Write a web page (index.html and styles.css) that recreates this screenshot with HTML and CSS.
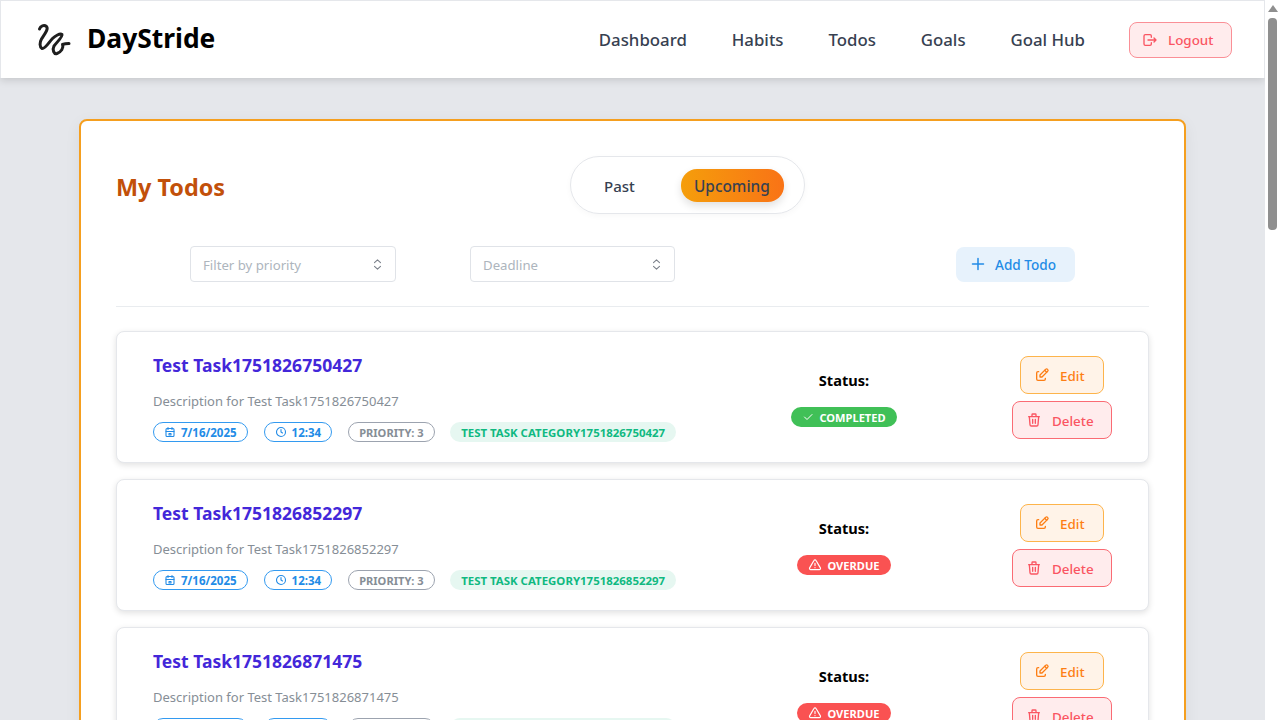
FILE: index.html
```html
<!DOCTYPE html>
<html lang="en">
<head>
  <meta charset="UTF-8">
  <title>DayStride - My Todos</title>
  <link rel="stylesheet" href="styles.css">
</head>
<body>
  <div class="viewport">
    <div class="page">
      <header class="topbar">
        <div class="brand">
          <svg class="brand-logo" width="34" height="34" viewBox="0 0 34 34" fill="none" stroke="#1f1f1f" stroke-width="3" stroke-linecap="round" stroke-linejoin="round"><path d="M2.500 6C3.500 3 7 1.500 9.500 3.500C12 6 7 12 4.500 16C2.500 19.500 2.500 24 5 25.500C8 26.500 12 19 15.500 15.500C18 13 23 10 25 11.500C26 13.500 20 19 17 23C15 27 17 31.500 20 30.500C24 29 27 25 25.500 21.500C28 20.500 30 20.500 32 20.500"/></svg>
          <span class="brand-name">DayStride</span>
        </div>
        <nav class="nav">
          <a>Dashboard</a>
          <a>Habits</a>
          <a>Todos</a>
          <a>Goals</a>
          <a>Goal Hub</a>
          <button class="logout">
            <svg width="16" height="16" viewBox="0 0 24 24" fill="none" stroke="currentColor" stroke-width="2" stroke-linecap="round" stroke-linejoin="round"><path d="M14 8V6a2 2 0 0 0-2-2H5a2 2 0 0 0-2 2v12a2 2 0 0 0 2 2h7a2 2 0 0 0 2-2v-2"/><path d="M9 12h12l-3-3m0 6l3-3"/></svg>
            Logout
          </button>
        </nav>
      </header>

      <main class="panel">
        <div class="panel-head">
          <h1 class="panel-title">My Todos</h1>
          <div class="toggle">
            <span class="toggle-item">Past</span>
            <span class="toggle-item active">Upcoming</span>
          </div>
        </div>

        <div class="filters">
          <div class="select select-first"><span class="select-text">Filter by priority</span>
            <svg width="15" height="15" viewBox="0 0 15 15" fill="none" stroke="#7b808a" stroke-width="1.100" stroke-linecap="round" stroke-linejoin="round"><path d="M4.500 5.700L7.500 2.800L10.500 5.700M4.500 9.300L7.500 12.200L10.500 9.300"/></svg>
          </div>
          <div class="select select-second"><span class="select-text">Deadline</span>
            <svg width="15" height="15" viewBox="0 0 15 15" fill="none" stroke="#7b808a" stroke-width="1.100" stroke-linecap="round" stroke-linejoin="round"><path d="M4.500 5.700L7.500 2.800L10.500 5.700M4.500 9.300L7.500 12.200L10.500 9.300"/></svg>
          </div>
          <button class="add-btn">
            <svg width="14" height="14" viewBox="0 0 14 14" fill="none" stroke="currentColor" stroke-width="1.500" stroke-linecap="round"><path d="M7 1.500v11M1.500 7h11"/></svg>
            Add Todo
          </button>
        </div>

        <div class="divider"></div>

        <div class="todo-list" id="todo-list"></div>
      </main>
    </div>
    <div class="scrollbar">
      <span class="scroll-arrow"></span>
      <span class="scroll-thumb"></span>
    </div>
  </div>

  <script>
    const todos = [
      { id: '1751826750427', status: 'completed' },
      { id: '1751826852297', status: 'overdue' },
      { id: '1751826871475', status: 'overdue' }
    ];

    const icons = {
      calendar: '<svg width="12" height="12" viewBox="0 0 24 24" fill="none" stroke="currentColor" stroke-width="2.200" stroke-linecap="round" stroke-linejoin="round"><rect x="4" y="5" width="16" height="16" rx="2"/><path d="M16 3v4M8 3v4M4 11h16M10 15h4v3h-4z"/></svg>',
      clock: '<svg width="12" height="12" viewBox="0 0 24 24" fill="none" stroke="currentColor" stroke-width="2.200" stroke-linecap="round" stroke-linejoin="round"><circle cx="12" cy="12" r="9"/><path d="M12 7v5l3 2"/></svg>',
      check: '<svg width="12" height="12" viewBox="0 0 24 24" fill="none" stroke="currentColor" stroke-width="2" stroke-linecap="round" stroke-linejoin="round"><path d="M5 12l5 5L20 7"/></svg>',
      alert: '<svg width="14" height="14" viewBox="0 0 24 24" fill="none" stroke="currentColor" stroke-width="2" stroke-linecap="round" stroke-linejoin="round"><path d="M12 9v4m0 3.500v.01"/><path d="M10.200 4.300L2.800 17a2 2 0 0 0 1.700 3h15a2 2 0 0 0 1.700-3L13.800 4.300a2 2 0 0 0-3.600 0z"/></svg>',
      edit: '<svg width="16" height="16" viewBox="0 0 24 24" fill="none" stroke="currentColor" stroke-width="2" stroke-linecap="round" stroke-linejoin="round"><path d="M7 7H6a2 2 0 0 0-2 2v9a2 2 0 0 0 2 2h9a2 2 0 0 0 2-2v-1"/><path d="M20.400 6.600a2.100 2.100 0 0 0-3-3L9 12v3h3z"/><path d="M16 5l3 3"/></svg>',
      trash: '<svg width="16" height="16" viewBox="0 0 24 24" fill="none" stroke="currentColor" stroke-width="2" stroke-linecap="round" stroke-linejoin="round"><path d="M4 7h16M10 11v6M14 11v6M5 7l1 12a2 2 0 0 0 2 2h8a2 2 0 0 0 2-2l1-12M9 7V4a1 1 0 0 1 1-1h4a1 1 0 0 1 1 1v3"/></svg>'
    };

    const list = document.getElementById('todo-list');

    // Generate todo cards
    todos.forEach((todo) => {
      const done = todo.status === 'completed';
      const card = document.createElement('article');
      card.className = 'todo';
      card.innerHTML = `
        <div class="todo-info">
          <h2 class="todo-title">Test Task${todo.id}</h2>
          <p class="todo-desc">Description for Test Task${todo.id}</p>
          <div class="tags">
            <span class="tag tag-blue">${icons.calendar}7/16/2025</span>
            <span class="tag tag-blue">${icons.clock}12:34</span>
            <span class="tag tag-gray">Priority: 3</span>
            <span class="tag tag-green">Test Task Category${todo.id}</span>
          </div>
        </div>
        <div class="todo-status">
          <span class="status-label">Status:</span>
          <span class="status-badge ${done ? 'done' : 'late'}">${done ? icons.check : icons.alert}${done ? 'Completed' : 'Overdue'}</span>
        </div>
        <div class="todo-actions">
          <button class="act act-edit">${icons.edit}<span class="act-text">Edit</span></button>
          <button class="act act-delete">${icons.trash}<span class="act-text">Delete</span></button>
        </div>
      `;
      list.appendChild(card);
    });
  </script>
</body>
</html>
```

FILE: styles.css
```css
* {
  box-sizing: border-box;
}
html, body {
  height: 100%;
  margin: 0;
}
body {
  font-family: "Noto Sans", sans-serif;
  color: #374151;
  overflow: hidden;
}
.viewport {
  display: flex;
  height: 720px;
}
.page {
  flex: 1;
  min-width: 0;
  height: 720px;
  overflow: hidden;
  background-color: #e5e7eb;
}
.scrollbar {
  width: 15px;
  background-color: #fff;
  display: flex;
  flex-direction: column;
  align-items: center;
}
.scroll-arrow {
  margin-top: 5px;
  border-left: 5px solid transparent;
  border-right: 5px solid transparent;
  border-bottom: 7px solid #8f8f8f;
}
.scroll-thumb {
  width: 9px;
  height: 212px;
  margin-top: 6px;
  border-radius: 4px;
  background-color: #8f8f8f;
}

/* top bar */
.topbar {
  height: 78px;
  display: flex;
  align-items: center;
  justify-content: space-between;
  padding: 0 32px 0 36px;
  background-color: #fff;
  border: 1px solid #e5e7eb;
  border-bottom: 0;
  box-shadow: 0 2px 8px rgba(0, 0, 0, 0.15);
  position: relative;
}
.brand {
  display: flex;
  align-items: center;
  gap: 16px;
}
.brand-name {
  padding-bottom: 3px;
  font-size: 26.400px;
  font-weight: 700;
  color: #000;
}
.nav {
  display: flex;
  align-items: center;
  gap: 45px;
  font-size: 16.800px;
  font-weight: 500;
  color: #374151;
}
.logout {
  display: flex;
  align-items: center;
  gap: 10px;
  height: 36px;
  width: 103px;
  margin-left: -1px;
  padding: 0 12px;
  border: 1px solid #fa8f96;
  border-radius: 8px;
  background-color: #ffeced;
  color: #fa5562;
  font: 500 13.400px "Noto Sans", sans-serif;
}

/* panel */
.panel {
  width: 1107px;
  margin: 41px 0 0 79px;
  padding: 35px 35px 0;
  background-color: #fff;
  border: 2px solid #f59f1f;
  border-radius: 8px;
  box-shadow: 0 4px 16px rgba(0, 0, 0, 0.06);
}
.panel-head {
  display: flex;
  align-items: center;
  height: 58px;
}
.panel-title {
  width: 454px;
  margin: 0;
  padding-top: 3px;
  font-size: 23.400px;
  font-weight: 700;
  color: #c2500a;
}
.toggle {
  width: 235px;
  height: 58px;
  display: flex;
  align-items: center;
  justify-content: space-between;
  padding: 0 20px 0 18px;
  border: 1px solid #e5e7eb;
  border-radius: 29px;
  box-shadow: 0 2px 6px rgba(0, 0, 0, 0.03);
  font-size: 15px;
  font-weight: 500;
}
.toggle-item {
  padding: 2px 15px 0;
}
.toggle-item.active {
  height: 33px;
  width: 103px;
  margin-top: 1px;
  line-height: 33px;
  padding: 1px 0 0 13px;
  font-size: 15.400px;
  border-radius: 16px;
  background: linear-gradient(90deg, #f59e0b, #f97316);
  box-shadow: 0 4px 8px rgba(0, 0, 0, 0.12);
}
.filters {
  display: flex;
  align-items: center;
  margin-top: 32px;
  padding-left: 74px;
}
.select {
  height: 36px;
  display: flex;
  align-items: center;
  justify-content: space-between;
  padding: 0 10px 0 12px;
  border: 1px solid #e0e3e8;
  border-radius: 4px;
  font-size: 13.200px;
  color: #adb5bd;
}
.select-text {
  padding-top: 2px;
}
.select-first {
  width: 206px;
}
.select-second {
  width: 205px;
  margin-left: 74px;
}
.add-btn {
  display: flex;
  align-items: center;
  gap: 10px;
  width: 119px;
  height: 35px;
  margin-left: 281px;
  padding: 0 15px;
  border: 0;
  border-radius: 8px;
  background-color: #e7f2fc;
  color: #228be6;
  font: 500 13.600px "Noto Sans", sans-serif;
}
.divider {
  height: 1px;
  margin-top: 24px;
  background-color: #e9ecef;
}

/* todo cards */
.todo-list {
  display: flex;
  flex-direction: column;
  gap: 16px;
  margin-top: 24px;
}
.todo {
  height: 132px;
  flex: none;
  display: flex;
  padding: 0 36px;
  border: 1px solid #e5e7eb;
  border-radius: 8px;
  background-color: #fff;
  box-shadow: 0 2px 6px rgba(0, 0, 0, 0.12);
}
.todo-info {
  width: 600px;
  padding-top: 21px;
}
.todo-title {
  margin: 0;
  font-size: 17.500px;
  line-height: 25px;
  font-weight: 700;
  color: #4327d9;
}
.todo-desc {
  margin: 14px 0 0;
  font-size: 13px;
  line-height: 18px;
  color: #868e96;
}
.tags {
  display: flex;
  gap: 16px;
  margin-top: 12px;
}
.tag {
  height: 20px;
  display: flex;
  align-items: center;
  gap: 5px;
  padding: 0 10px;
  border-radius: 10px;
  font-size: 11.500px;
  font-weight: 700;
  text-transform: uppercase;
  white-space: nowrap;
}
.tag-blue {
  border: 1px solid #339af0;
  color: #228be6;
}
.tag-gray {
  width: 87px;
  border: 1px solid #9ca3af;
  font-size: 11.100px;
  color: #868e96;
}
.tag-green {
  margin-left: -1px;
  padding: 0 11px;
  font-size: 11.450px;
  background-color: #e6f7f1;
  color: #10b981;
}
.todo-status {
  width: 182px;
  display: flex;
  flex-direction: column;
  align-items: center;
  padding-top: 38px;
}
.status-label {
  font-size: 14.600px;
  line-height: 20px;
  font-weight: 700;
  color: #000;
}
.status-badge {
  height: 20px;
  display: flex;
  align-items: center;
  gap: 5px;
  margin-top: 17px;
  padding: 0 11px;
  border-radius: 10px;
  font-size: 11.100px;
  font-weight: 700;
  text-transform: uppercase;
  color: #fff;
}
.status-badge.done {
  background-color: #40c057;
}
.status-badge.late {
  background-color: #fa5252;
}
.todo-actions {
  flex: none;
  width: 100px;
  margin-left: auto;
  display: flex;
  flex-direction: column;
  align-items: center;
  gap: 7px;
  padding-top: 24px;
}
.act {
  height: 38px;
  display: flex;
  align-items: center;
  gap: 10px;
  padding: 0 0 0 13px;
  border-radius: 8px;
  font: 500 13.400px "Noto Sans", sans-serif;
}
.act-text {
  padding-top: 2px;
}
.act-edit {
  width: 84px;
  border: 1px solid #fdb44b;
  background-color: #fff3e8;
  color: #fd7e14;
}
.act-delete {
  width: 100px;
  border: 1px solid #fa6b74;
  background-color: #ffeced;
  color: #fa5562;
}
```
